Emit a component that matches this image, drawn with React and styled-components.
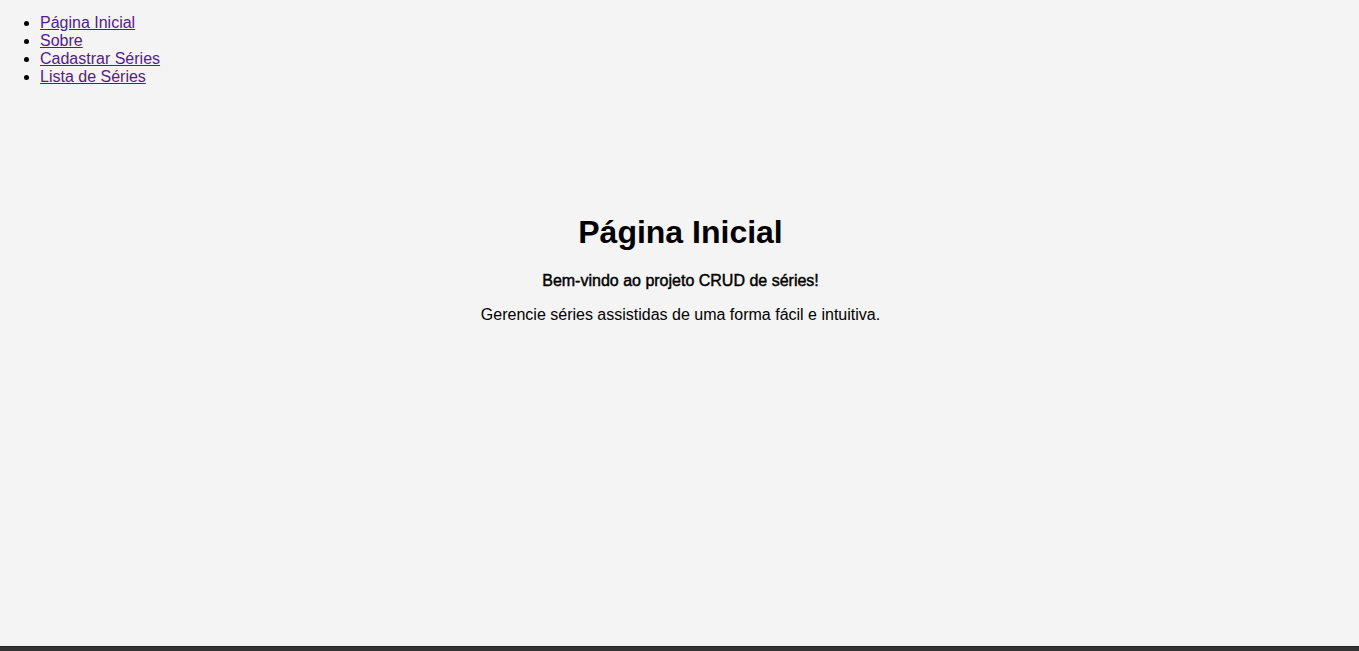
import React from "react";
import styled, { createGlobalStyle } from "styled-components";

const GlobalStyle = createGlobalStyle`
	html, body {
		margin: 0;
		padding: 0;
		background-color: #f4f4f4;
		font-family: "Liberation Sans", Arial, sans-serif;
		color: #000000;
	}
`;

const links = [
	{ href: "#/", label: "Página Inicial" },
	{ href: "#/sobre", label: "Sobre" },
	{ href: "#/cadastrar", label: "Cadastrar Séries" },
	{ href: "#/lista", label: "Lista de Séries" },
];

function App() {
	return (
		<Page>
			<GlobalStyle />
			<Header>
				<nav>
					<NavList>
						{links.map((link) => (
							<li key={link.label}>
								<NavLink href={link.href}>{link.label}</NavLink>
							</li>
						))}
					</NavList>
				</nav>
			</Header>
			<Main>
				<Title>Página Inicial</Title>
				<Welcome>Bem-vindo ao projeto CRUD de séries!</Welcome>
				<Text>Gerencie séries assistidas de uma forma fácil e intuitiva.</Text>
			</Main>
			<Footer />
		</Page>
	);
}

const Page = styled.div`
	display: flex;
	flex-direction: column;
`;

const Header = styled.header`
	padding-top: 14px;
`;

const NavList = styled.ul`
	margin: 0;
	padding-left: 40px;
	list-style: disc;
	font-size: 16px;
	line-height: 18px;
`;

const NavLink = styled.a`
	color: #551a8b;
	text-decoration: underline;
`;

const Main = styled.main`
	box-sizing: border-box;
	min-height: 560px;
	padding: 107px 0 0 2px;
	text-align: center;
`;

const Title = styled.h1`
	margin: 21px 0;
	font-size: 32px;
	font-weight: bold;
`;

const Welcome = styled.p`
	margin: 0 0 16px;
	font-size: 16px;
	font-weight: normal;
	-webkit-text-stroke: 0.45px #000000;
`;

const Text = styled.p`
	margin: 0;
	font-size: 16px;
`;

const Footer = styled.footer`
	height: 40px;
	background-color: #333333;
	border-top: 1px solid #222222;
`;

export default App;
